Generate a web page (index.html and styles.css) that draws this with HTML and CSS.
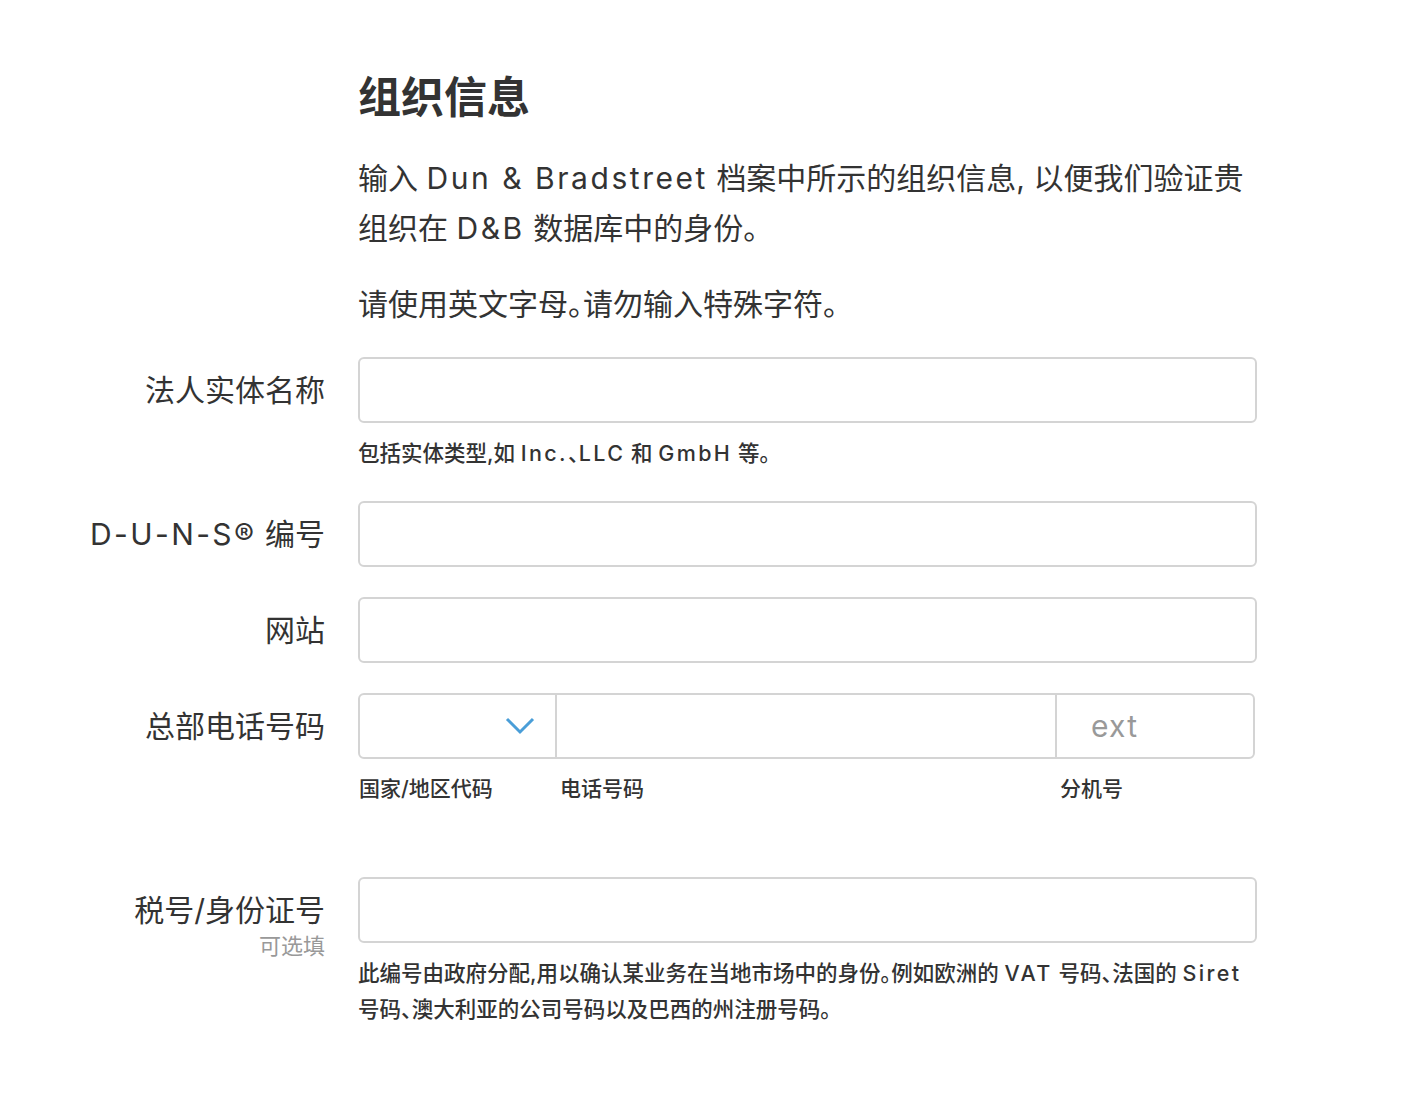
FILE: index.html
```html
<!DOCTYPE html>
<html>
<head>
    <title>组织信息</title>
    <link rel="stylesheet" href="styles.css">
</head>
<body>
    <div class="page">
        <div class="intro">
            <h1>组织信息</h1>
            <p>输入 <span class="en">Dun &amp; Bradstreet</span> 档案中所示的组织信息, 以便我们验证贵<br>组织在 <span class="en">D&amp;B</span> 数据库中的身份。</p>
            <p class="note">请使用英文字母。请勿输入特殊字符。</p>
        </div>

        <div class="row">
            <label class="label" for="entityName">法人实体名称</label>
            <div class="control">
                <input class="field" type="text" id="entityName">
                <div class="hint">包括实体类型,如 <span class="en">Inc.</span>、<span class="en">LLC</span> 和 <span class="en">GmbH</span> 等。</div>
            </div>
        </div>

        <div class="row">
            <label class="label" for="duns"><span class="en">D-U-N-S®</span> 编号</label>
            <div class="control">
                <input class="field" type="text" id="duns">
            </div>
        </div>

        <div class="row">
            <label class="label" for="website">网站</label>
            <div class="control">
                <input class="field" type="text" id="website">
            </div>
        </div>

        <div class="row">
            <label class="label" for="phone">总部电话号码</label>
            <div class="control">
                <div class="phone">
                    <div class="country">
                        <svg class="chevron" width="30" height="18" viewBox="0 0 30 18">
                            <path d="M2 2 L15 15 L28 2" fill="none" stroke="#4a9ed8" stroke-width="3"/>
                        </svg>
                    </div>
                    <input class="number" type="text" id="phone">
                    <input class="ext" type="text" placeholder="ext">
                </div>
                <div class="phone-labels">
                    <span class="sub-country">国家/地区代码</span>
                    <span class="sub-number">电话号码</span>
                    <span class="sub-ext">分机号</span>
                </div>
            </div>
        </div>

        <div class="row tax">
            <div class="label">
                <label for="taxId">税号/身份证号</label>
                <div class="optional">可选填</div>
            </div>
            <div class="control">
                <input class="field" type="text" id="taxId">
                <div class="hint">此编号由政府分配,用以确认某业务在当地市场中的身份。例如欧洲的 <span class="en">VAT</span> 号码、法国的 <span class="en">Siret</span><br>号码、澳大利亚的公司号码以及巴西的州注册号码。</div>
            </div>
        </div>
    </div>
</body>
</html>
```

FILE: styles.css
```css
body {
    margin: 0;
    background-color: #fff;
    color: #333;
    font-family: Inter, "Noto Sans CJK SC", sans-serif;
}

.page {
    padding-top: 73px;
    padding-bottom: 60px;
}

.intro {
    margin-left: 358px;
    width: 960px;
}

h1 {
    font-size: 43px;
    line-height: 48px;
    font-weight: 700;
    margin: 0 0 32px 0;
    color: #333;
}

.intro p {
    font-size: 30px;
    line-height: 50px;
    margin: 0 0 26px 0;
    white-space: nowrap;
    font-feature-settings: "halt";
}

.intro p.note {
    margin-bottom: 28px;
}

/* latin runs are set a little looser, like the system font */
.en {
    letter-spacing: 0.085em;
}

.row {
    display: flex;
    gap: 33px;
    margin-bottom: 30px;
}

.row.tax {
    margin-top: 70px;
}

.label {
    width: 325px;
    text-align: right;
    font-size: 30px;
    line-height: 66px;
    color: #333;
}

.label .en {
    letter-spacing: 0.08em;
}

.optional {
    font-size: 22px;
    line-height: 26px;
    color: #999;
    margin-top: -10px;
}

.control {
    width: 899px;
}

.field {
    display: block;
    box-sizing: border-box;
    width: 899px;
    height: 66px;
    border: 2px solid #d4d4d4;
    border-radius: 6px;
    font-size: 28px;
    padding: 0 20px;
    font-family: inherit;
    outline: none;
}

.hint {
    margin-top: 12px;
    font-size: 21.5px;
    line-height: 36px;
    font-weight: 500;
    color: #333;
    white-space: nowrap;
    font-feature-settings: "halt";
}

.hint .en {
    letter-spacing: 0.11em;
}

.phone {
    display: flex;
    box-sizing: border-box;
    width: 897px;
    height: 66px;
    border: 2px solid #d4d4d4;
    border-radius: 6px;
}

.country {
    width: 197px;
    border-right: 2px solid #d4d4d4;
    display: flex;
    align-items: center;
    justify-content: flex-end;
    padding-right: 20px;
    box-sizing: border-box;
}

.phone input {
    border: none;
    outline: none;
    font-family: inherit;
    font-size: 30px;
    box-sizing: border-box;
    height: 62px;
    background: transparent;
}

.number {
    width: 500px;
    border-right: 2px solid #d4d4d4 !important;
    padding: 0 20px;
}

.ext {
    flex: 1;
    min-width: 0;
    padding: 0 34px;
    letter-spacing: 0.04em;
}

.ext::placeholder {
    color: #999;
}

.phone-labels {
    display: flex;
    margin-top: 12px;
    font-size: 21px;
    line-height: 36px;
    font-weight: 500;
}

.sub-country {
    width: 200px;
    padding-left: 1px;
}

.sub-number {
    width: 500px;
    padding-left: 1px;
}
```
